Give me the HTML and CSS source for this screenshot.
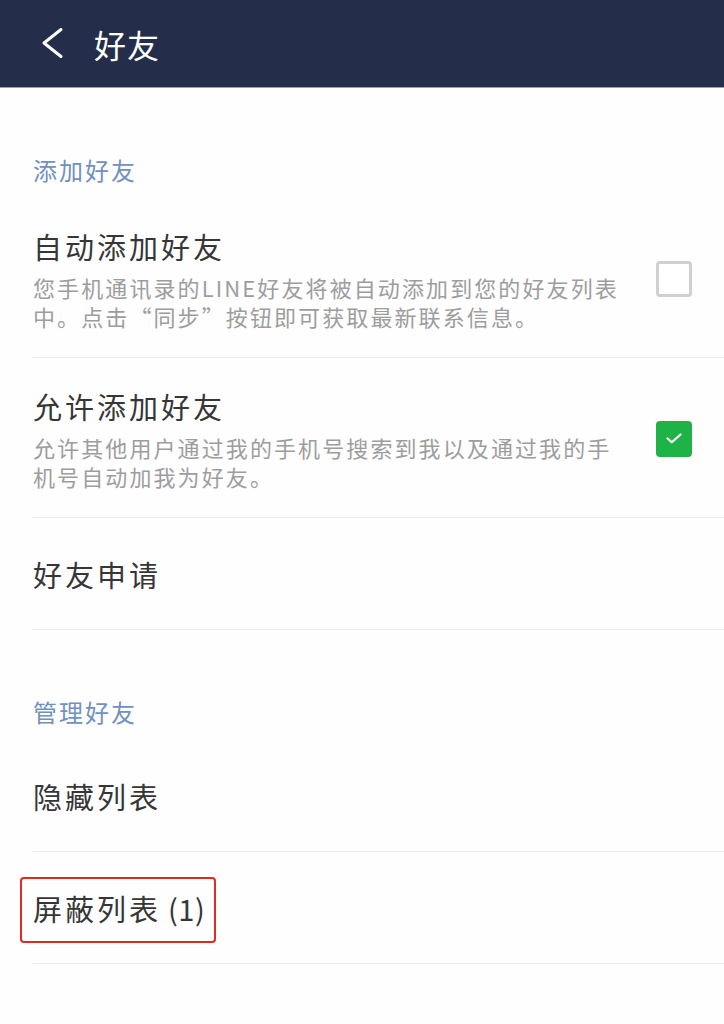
FILE: index.html
```html
<!DOCTYPE html>
<html lang="zh-CN">
<head>
<meta charset="utf-8">
<title>好友</title>
<link rel="stylesheet" href="styles.css">
</head>
<body>
<header class="appbar">
  <svg class="back" width="24" height="34" viewBox="0 0 24 34" aria-hidden="true">
    <polyline points="21,2.5 4,16 21,29.5" fill="none" stroke="#ffffff" stroke-width="3" stroke-linecap="round" stroke-linejoin="round"/>
  </svg>
  <h1 class="appbar-title">好友</h1>
</header>

<main class="content">
  <h2 class="section-title">添加好友</h2>
  <ul class="list">
    <li class="item item-detail">
      <div class="item-text">
        <div class="item-title">自动添加好友</div>
        <div class="item-desc">您手机通讯录的LINE好友将被自动添加到您的好友列表<br>中。点击“同步”按钮即可获取最新联系信息。</div>
      </div>
      <span class="checkbox"></span>
    </li>
    <li class="item item-detail">
      <div class="item-text">
        <div class="item-title">允许添加好友</div>
        <div class="item-desc">允许其他用户通过我的手机号搜索到我以及通过我的手<br>机号自动加我为好友。</div>
      </div>
      <span class="checkbox checked">
        <svg width="16" height="11" viewBox="0 0 16 11" aria-hidden="true">
          <polyline points="1.5,5.5 5.8,9.3 14.5,1.5" fill="none" stroke="#ffffff" stroke-width="2.2" stroke-linecap="round" stroke-linejoin="round"/>
        </svg>
      </span>
    </li>
    <li class="item item-simple">
      <div class="item-title">好友申请</div>
    </li>
  </ul>

  <h2 class="section-title">管理好友</h2>
  <ul class="list">
    <li class="item item-simple">
      <div class="item-title"><span>隐藏列表</span></div>
    </li>
    <li class="item item-simple">
      <div class="item-title"><span class="highlight">屏蔽列表<span class="count"> (1)</span></span></div>
    </li>
  </ul>
</main>
</body>
</html>
```

FILE: styles.css
```css
* {
  box-sizing: border-box;
}

html, body {
  margin: 0;
  padding: 0;
  background: #fefefe;
}

body {
  font-family: "Noto Sans CJK SC", "Noto Sans", "Liberation Sans", sans-serif;
  color: #333333;
}

.appbar {
  height: 88px;
  background: #242d4a;
  border-bottom: 1px solid #8ea3c6;
  display: flex;
  align-items: center;
  padding-left: 40px;
}

.back {
  display: block;
  flex: none;
  margin-top: 1px;
}

.appbar-title {
  margin: 0 0 0 30px;
  font-size: 32px;
  font-weight: 400;
  line-height: 40px;
  color: #ffffff;
  letter-spacing: 1px;
}

.content {
  padding: 0;
}

.section-title {
  margin: 0;
  padding: 62px 33px 8px;
  font-size: 24px;
  line-height: 40px;
  font-weight: 400;
  color: #7191bf;
  letter-spacing: 2px;
}

.list {
  list-style: none;
  margin: 0;
  padding: 0 0 0 33px;
}

.item {
  border-bottom: 1px solid #ececec;
  padding-right: 32px;
}

.item-detail {
  display: flex;
  align-items: center;
  justify-content: space-between;
  padding-top: 28px;
  padding-bottom: 26px;
}

.item-simple {
  padding-top: 36px;
  padding-bottom: 35px;
}

.item-title {
  font-size: 29px;
  line-height: 40px;
  color: #363636;
  letter-spacing: 3px;
}

.item-desc {
  margin-top: 7px;
  font-size: 22px;
  line-height: 29px;
  color: #9d9d9d;
  letter-spacing: 2.1px;
  white-space: nowrap;
}

.checkbox {
  flex: none;
  width: 36px;
  height: 36px;
  border: 3px solid #d0d0d0;
  border-radius: 4px;
  background: #ffffff;
  display: flex;
  align-items: center;
  justify-content: center;
}

.checkbox.checked {
  background: #1eb346;
  border-color: #1eb346;
}

.checkbox svg {
  display: block;
}

.highlight {
  position: relative;
  display: inline-block;
}

.count {
  letter-spacing: 0.5px;
}

.highlight::after {
  content: "";
  position: absolute;
  top: -11px;
  bottom: -15px;
  left: -13px;
  right: -11px;
  border: 2px solid #e32a22;
  border-radius: 4px;
}
```
